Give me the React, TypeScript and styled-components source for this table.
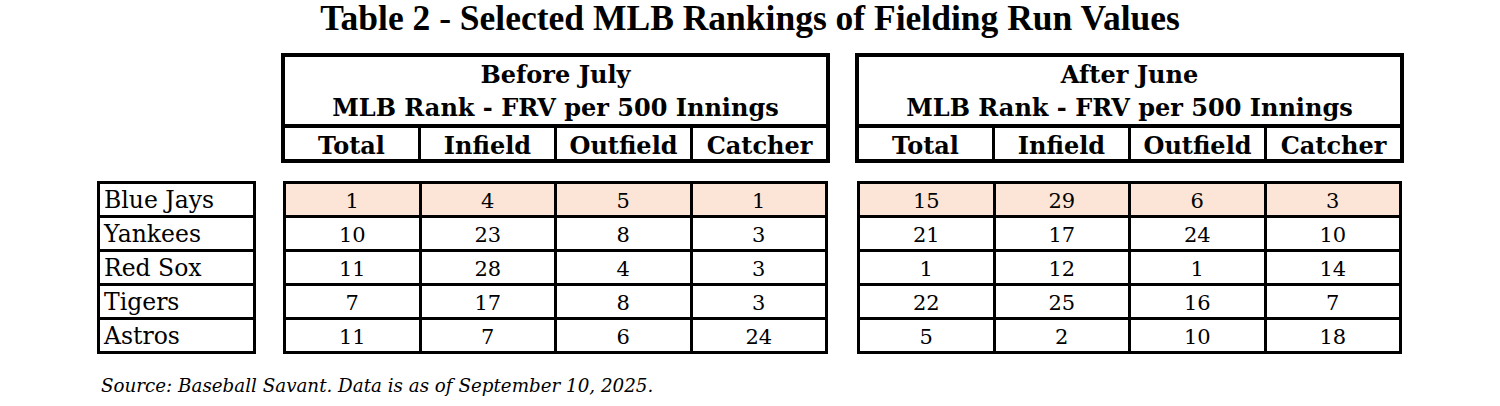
import React from "react";
import styled, { createGlobalStyle } from "styled-components";

type Group = {
  period: string;
  rows: number[][];
};

const teams = ["Blue Jays", "Yankees", "Red Sox", "Tigers", "Astros"];
const columns = ["Total", "Infield", "Outfield", "Catcher"];

const groups: Group[] = [
  {
    period: "Before July",
    rows: [
      [1, 4, 5, 1],
      [10, 23, 8, 3],
      [11, 28, 4, 3],
      [7, 17, 8, 3],
      [11, 7, 6, 24],
    ],
  },
  {
    period: "After June",
    rows: [
      [15, 29, 6, 3],
      [21, 17, 24, 10],
      [1, 12, 1, 14],
      [22, 25, 16, 7],
      [5, 2, 10, 18],
    ],
  },
];

const GlobalStyle = createGlobalStyle`
  html, body {
    margin: 0;
    padding: 0;
    background: #ffffff;
  }
  body {
    width: 1500px;
    height: 406px;
    overflow: hidden;
    color: #000000;
    font-family: "DejaVu Serif", "Liberation Serif", serif;
  }
`;

const Page = styled.div`
  display: flex;
  flex-direction: column;
  width: 1500px;
`;

const Title = styled.h1`
  margin: 0;
  height: 40px;
  font-family: "Liberation Serif", serif;
  font-weight: 700;
  font-size: 35.5px;
  line-height: 37px;
  text-align: center;
`;

const Body = styled.div`
  display: flex;
  align-items: flex-start;
  gap: 25px;
  margin-top: 13px;
  padding-left: 97px;
`;

const NameColumn = styled.div`
  width: 159px;
  padding-top: 128px;
`;

const Group = styled.div`
  display: flex;
  flex-direction: column;
  gap: 18px;
  width: 549px;
`;

const HeaderBox = styled.div`
  display: grid;
  grid-template-columns: repeat(4, 1fr);
  grid-template-rows: 67px 31px;
  column-gap: 3px;
  row-gap: 4px;
  border: 4px solid #000000;
  background: #000000;
`;

const HeaderTitle = styled.div`
  grid-column: 1 / -1;
  display: flex;
  flex-direction: column;
  align-items: center;
  justify-content: center;
  background: #ffffff;
  font-weight: 700;
  font-size: 24px;
  line-height: 33px;
`;

const HeaderCell = styled.div`
  display: flex;
  align-items: center;
  justify-content: center;
  padding-top: 3px;
  background: #ffffff;
  font-weight: 700;
  font-size: 24px;
`;

const Grid = styled.div<{ $cols: number }>`
  display: grid;
  grid-template-columns: repeat(${(p) => p.$cols}, 1fr);
  grid-auto-rows: 31px;
  gap: 3px;
  border: 3px solid #000000;
  background: #000000;
`;

const DataGrid = styled(Grid)`
  margin: 0 2px;
`;

const Cell = styled.div<{ $highlight?: boolean }>`
  display: flex;
  align-items: center;
  justify-content: center;
  padding-top: 3px;
  background: ${(p) => (p.$highlight ? "#fce4d6" : "#ffffff")};
  font-size: 21px;
  font-variant-numeric: oldstyle-nums;
`;

const NameCell = styled.div`
  display: flex;
  align-items: center;
  padding-left: 4px;
  background: #ffffff;
  font-size: 23.5px;
`;

const Source = styled.p`
  margin: 20px 0 0 101px;
  font-style: italic;
  font-size: 18.3px;
  line-height: 24px;
`;

function RankGroup({ group }: { group: Group }) {
  return (
    <Group>
      <HeaderBox>
        <HeaderTitle>
          <span>{group.period}</span>
          <span>MLB Rank - FRV per 500 Innings</span>
        </HeaderTitle>
        {columns.map((c) => (
          <HeaderCell key={c}>{c}</HeaderCell>
        ))}
      </HeaderBox>
      <DataGrid $cols={4}>
        {group.rows.map((row, r) =>
          row.map((v, c) => (
            <Cell key={`${r}-${c}`} $highlight={r === 0}>
              {v}
            </Cell>
          ))
        )}
      </DataGrid>
    </Group>
  );
}

export default function App() {
  return (
    <>
      <GlobalStyle />
      <Page>
        <Title>Table 2 - Selected MLB Rankings of Fielding Run Values</Title>
        <Body>
          <NameColumn>
            <Grid $cols={1}>
              {teams.map((t) => (
                <NameCell key={t}>{t}</NameCell>
              ))}
            </Grid>
          </NameColumn>
          {groups.map((g) => (
            <RankGroup key={g.period} group={g} />
          ))}
        </Body>
        <Source>Source: Baseball Savant. Data is as of September 10, 2025.</Source>
      </Page>
    </>
  );
}
